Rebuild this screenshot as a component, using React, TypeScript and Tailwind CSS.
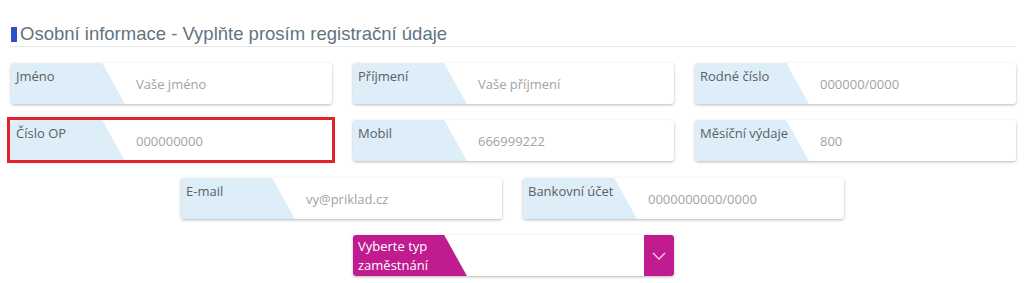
import React from 'react'

type FieldProps = {
  label: string
  placeholder: string
  marked?: boolean
}

const Field = ({ label, placeholder, marked }: FieldProps) => {
  return (
    <div className="relative h-[41px] w-[321px] rounded-[3px] bg-white shadow-[0_1px_3px_rgba(0,0,0,0.28)] flex items-center font-['Open_Sans',sans-serif]">
      {/* light blue label wedge */}
      <div
        className="absolute left-0 top-0 h-full w-[114px] rounded-l-[3px] bg-[#ddeef9]"
        style={{ clipPath: 'polygon(0 0, 80% 0, 100% 100%, 0 100%)' }}
      ></div>
      <span className="absolute left-[5px] top-[4px] text-[13px] leading-[18px] text-[#5a6065]">
        {label}
      </span>
      <span className="ml-[125px] mt-[2px] text-[13px] text-[#a3a3a3]">{placeholder}</span>
      {marked && (
        <div className="absolute -left-[4px] -top-[3px] -right-[3px] -bottom-[2px] border-[3px] border-[#e3222b]"></div>
      )}
    </div>
  )
}

const App = () => {
  return (
    <div className="w-[1024px] h-[283px] bg-white overflow-hidden">
      {/* Section title */}
      <div className="pt-[24px] pl-[10px] pr-[9px]">
        <div className="flex items-center gap-[3px] pb-[2px] border-b border-[#e6e6e6]">
          <div className="ml-[1px] w-[6px] h-[15px] bg-[#2f50c9]"></div>
          <h2 className="text-[18.5px] leading-[20px] text-[#63737f] font-['Liberation_Sans',Arial,sans-serif]">
            Osobní informace - Vyplňte prosím registrační údaje
          </h2>
        </div>
      </div>

      <div className="mt-[16px] flex flex-col items-center gap-[16px]">
        <div className="flex gap-[21px] pl-[3px]">
          <Field label="Jméno" placeholder="Vaše jméno" />
          <Field label="Příjmení" placeholder="Vaše příjmení" />
          <Field label="Rodné číslo" placeholder="000000/0000" />
        </div>
        <div className="flex gap-[21px] pl-[3px]">
          <Field label="Číslo OP" placeholder="000000000" marked />
          <Field label="Mobil" placeholder="666999222" />
          <Field label="Měsíční výdaje" placeholder="800" />
        </div>
        <div className="flex gap-[21px] pl-[1px] mt-[1px]">
          <Field label="E-mail" placeholder="vy@priklad.cz" />
          <Field label="Bankovní účet" placeholder="0000000000/0000" />
        </div>

        {/* employment type select */}
        <div className="relative ml-[3px] h-[41px] w-[321px] rounded-[3px] bg-white shadow-[0_1px_3px_rgba(0,0,0,0.28)] flex font-['Open_Sans',sans-serif]">
          <div
            className="absolute left-0 top-0 h-full w-[114px] rounded-l-[3px] bg-[#c01c8f]"
            style={{ clipPath: 'polygon(0 0, 80% 0, 100% 100%, 0 100%)' }}
          ></div>
          <span className="relative pl-[5px] pt-[2px] text-[13px] leading-[19px] text-white">
            Vyberte typ
            <br />
            zaměstnání
          </span>
          <div className="ml-auto w-[30px] h-full rounded-r-[3px] bg-[#c01c8f] flex items-center justify-center">
            <svg width="14" height="8" viewBox="0 0 14 8" fill="none">
              <path d="M1 1l6 6 6-6" stroke="#f6d6ec" strokeWidth="1.3" />
            </svg>
          </div>
        </div>
      </div>
    </div>
  )
}

export default App
